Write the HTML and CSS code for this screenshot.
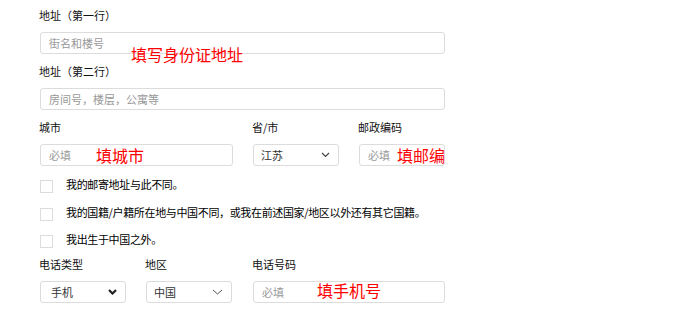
FILE: index.html
```html
<!DOCTYPE html>
<html lang="zh-CN">
<head>
    <meta charset="UTF-8">
    <meta name="viewport" content="width=device-width, initial-scale=1.0">
    <title>地址信息</title>
    <link rel="stylesheet" href="styles.css">
</head>
<body>
    <form class="addr-form">
        <div class="field">
            <label>地址（第一行）</label>
            <div class="input"><span class="ph">街名和楼号</span></div>
        </div>
        <div class="field">
            <label>地址（第二行）</label>
            <div class="input"><span class="ph">房间号，楼层，公寓等</span></div>
        </div>

        <div class="row row-city">
            <div class="field">
                <label>城市</label>
                <div class="input"><span class="ph">必填</span></div>
            </div>
            <div class="field">
                <label>省/市</label>
                <div class="select">
                    <span>江苏</span>
                    <svg width="9" height="6" viewBox="0 0 9 6"><path d="M1 1l3.5 3.5L8 1" fill="none" stroke="#444" stroke-width="1.2"/></svg>
                </div>
            </div>
            <div class="field">
                <label>邮政编码</label>
                <div class="input"><span class="ph">必填</span></div>
            </div>
        </div>

        <div class="checks">
            <div class="check"><span class="box"></span><span>我的邮寄地址与此不同。</span></div>
            <div class="check"><span class="box"></span><span>我的国籍/户籍所在地与中国不同，或我在前述国家/地区以外还有其它国籍。</span></div>
            <div class="check"><span class="box"></span><span>我出生于中国之外。</span></div>
        </div>

        <div class="row row-phone">
            <div class="field">
                <label>电话类型</label>
                <div class="select select-bold">
                    <span>手机</span>
                    <svg width="9" height="6" viewBox="0 0 9 6"><path d="M1 1l3.5 3.5L8 1" fill="none" stroke="#222" stroke-width="2.2"/></svg>
                </div>
            </div>
            <div class="field">
                <label>地区</label>
                <div class="select">
                    <span>中国</span>
                    <svg width="11" height="6" viewBox="0 0 11 6"><path d="M1 1l4.5 4L10 1" fill="none" stroke="#555" stroke-width="1"/></svg>
                </div>
            </div>
            <div class="field">
                <label>电话号码</label>
                <div class="input"><span class="ph">必填</span></div>
            </div>
        </div>

        <!-- 红色标注 -->
        <span class="note" style="left: 91px; top: 45px;">填写身份证地址</span>
        <span class="note" style="left: 56px; top: 146px;">填城市</span>
        <span class="note" style="left: 357px; top: 146px;">填邮编</span>
        <span class="note" style="left: 277px; top: 281px;">填手机号</span>
    </form>
</body>
</html>
```

FILE: styles.css
```css
body { margin: 0; background: #fff; font-family: "Noto Sans CJK SC", "Microsoft YaHei", sans-serif; font-size: 11px; color: #111; }
.addr-form { position: relative; width: 405px; margin-left: 40px; padding-top: 7px; }
.field { display: flex; flex-direction: column; margin-bottom: 9px; }
.field label { line-height: 16px; height: 16px; margin-bottom: 9px; margin-left: -1px; }
.input, .select { box-sizing: border-box; height: 22px; border: 1px solid #dcdcdc; border-radius: 3px; background: #fff; display: flex; align-items: center; padding: 0 8px; }
.ph { color: #999; }
.select { justify-content: space-between; color: #333; padding: 0 8px 0 7px; }
.select-bold { padding-left: 10px; }
.select svg { display: block; }

.row { display: grid; gap: 20px; }
.row-city { grid-template-columns: 193px 86px 86px; }
.row-phone { grid-template-columns: 86px 86px 193px; }
.row-phone .field:last-child { margin-left: 1px; }
.row .field { margin-bottom: 0; }

.checks { display: flex; flex-direction: column; gap: 13.5px; margin: 11px 0 10px; }
.check { display: flex; align-items: flex-start; height: 14px; line-height: 14px; color: #000; letter-spacing: -0.35px; }
.check .box { box-sizing: border-box; width: 13px; height: 13px; border: 1px solid #dcdcdc; margin: 3px 13px 0 0; flex-shrink: 0; }

.note { position: absolute; font-size: 16px; line-height: 18px; color: #f00; white-space: nowrap; }
```
